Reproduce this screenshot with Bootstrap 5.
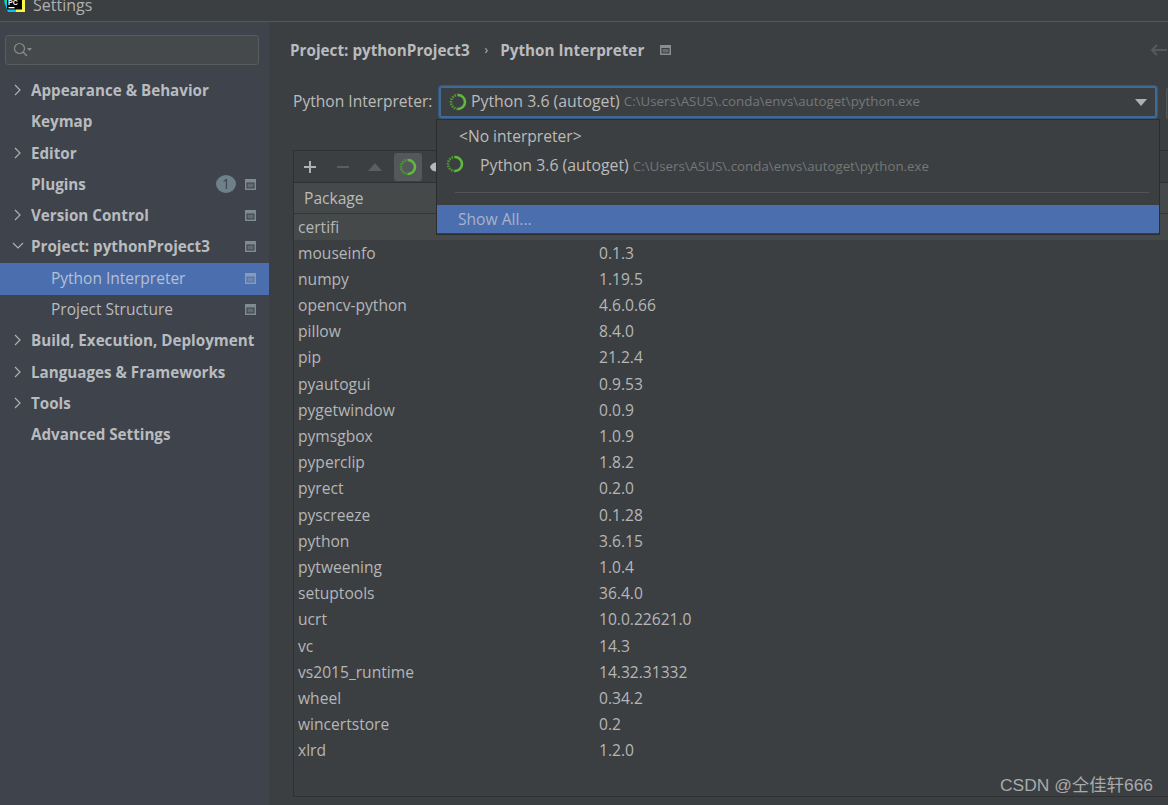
<!DOCTYPE html>
<html lang="en"><head><meta charset="utf-8"><title>Settings</title>
<link rel="stylesheet" href="https://cdn.jsdelivr.net/npm/bootstrap@5.3.0/dist/css/bootstrap.min.css">
<style>
html,body{height:100%}
body{width:1168px;height:805px;overflow:hidden;background:#3c3f41;color:#bbb;font-family:"Open Sans","Noto Sans",sans-serif;font-size:15.6px;position:relative}
.title-bar{height:22px;border-bottom:1px solid #55585a;background:#3c3f41;overflow:hidden}
.title-text{font-size:16px;color:#aeb0b2;line-height:10px;margin-left:7px}
.shell{height:783px}
.side{width:269px;background:#3e434c;flex:none}
.search-box{margin:13px 10px 0 5px;height:30px;border:1px solid #5a5c5e;border-radius:3px;background:#46494b;padding-left:7px}
.tree{margin-top:10px}
.tree-row{height:31.3px;line-height:31.3px;position:relative;padding-left:31px;font-weight:700;font-size:15.2px;color:#b9bcbf}
.tree-row.sub{padding-left:51px;font-weight:400;font-size:15.5px}
.tree-row.sel{background:#4b6eaf;color:#b5c0d4;height:32px;margin-bottom:-.7px}
.chev{position:absolute;left:14px;top:9px}
.chev-open{left:12px;top:11px}
.proj{position:absolute;left:245px;top:10px}
.count{position:absolute;left:216px;top:6px;width:20px;height:18px;border-radius:50%;background:#6e8089;color:#3e434c;font-size:14px;font-weight:400;line-height:18px;text-align:center}
.main{min-width:0;position:relative}
.crumbs{height:56px;padding:0 0 0 21px;font-weight:700;color:#b9bcbf;font-size:15.25px}
.crumb-sep{margin:0 12px 0 15px;font-weight:400;font-size:12px}
.back-arrow{margin-right:-1px}
.interp-row{height:38px;padding-left:24px;margin-top:5px}
.interp-label{width:146px;flex:none;white-space:nowrap}
.combo{width:718px;flex:none;height:32px;border:2px solid #3f6a98;border-radius:3px;background:#3c3f41;padding-left:8px;position:relative;box-shadow:0 0 0 1px #3a5675;white-space:nowrap}
.py-name{font-size:15.85px}
.path{font-size:13.3px;color:#757779;margin-left:4px}
.caret-down{position:absolute;right:8px;top:11px;width:0;height:0;border-left:6px solid transparent;border-right:6px solid transparent;border-top:7px solid #aeb0b2}
.extra-btn{position:absolute;left:897px;top:66px;width:10px;height:31px;border:1px solid #55585a;border-right:0;border-radius:3px 0 0 3px;background:#45484a}
.pkg-panel{margin:29px 0 0 24px;border:1px solid #2e3032;border-right:0;height:647px}
.tools{height:32px;border-bottom:1px solid #2e3032;padding-left:9px}
.tool-a{width:33px}
.tool-b{width:31px}
.tool-c{width:27px}
.tool-on{width:28px;height:28px;border-radius:3px;background:#55585a;margin-right:8px}
.pkg-head{height:30.5px;background:#45494a;border-bottom:1px solid #333537;line-height:30.5px;padding-left:10px}
.pkg-row{height:26.2px;line-height:26.2px;padding-left:4px;color:#b4b6b8}
.pkg-row.alt{background:#45494a}
.pkg-name{width:301px;flex:none}
.popup{position:absolute;left:167px;top:97px;width:724px;height:116px;background:#3c3f41;border:1px solid #2b2d2e;z-index:5}
.pop-item{height:29px;line-height:29px;white-space:nowrap}
.pop-none{padding-left:22px;margin-top:2px}
.pop-py{position:relative;padding-left:43px}
.pop-py svg{position:absolute;left:9px;top:4px}
.pop-line{height:1px;background:#515355;margin:12px 10px 12px 18px}
.pop-sel{background:#4b6eaf;height:28px;line-height:28px;padding-left:21px;color:#a9b3c6}
.mark-logo{position:absolute;right:15px;bottom:9px;font-family:"Liberation Sans","Noto Sans CJK SC",sans-serif;font-size:17.4px;color:#a8aaac;z-index:6;line-height:22px}
</style></head>
<body>
<div class="title-bar d-flex align-items-center">
  <svg width="22" height="12" viewBox="0 0 22 12" class="ms-1 align-self-start" aria-hidden="true"><path d="M0 0h20v11H4z" fill="#21d789"/><path d="M12 0h9v12h-9z" fill="#fcf84a"/><path d="M0 2l4 10h8V8z" fill="#07c3f2"/><rect x="3" y="0" width="15" height="9.500" fill="#000"/><text x="4" y="5" font-size="7" font-weight="700" fill="#fff" font-family="Liberation Sans">PC</text><rect x="4.500" y="7" width="6" height="1.300" fill="#fff"/></svg>
  <div class="title-text align-self-start">Settings</div>
</div>
<div class="shell d-flex">
  <div class="side">
    <div class="search-box d-flex align-items-center">
      <svg width="20" height="16" viewBox="0 0 20 16" aria-hidden="true"><circle cx="6.500" cy="6.500" r="5" fill="none" stroke="#87898b" stroke-width="1.200"/><path d="M10 10l4 4" stroke="#87898b" stroke-width="1.400"/><path d="M14 6h5l-2.500 3z" fill="#87898b"/></svg>
    </div>
    <div class="tree">
      <div class="tree-row"><svg class="chev" width="8" height="12" viewBox="0 0 8 12" aria-hidden="true"><path d="M1 1l5 5-5 5" fill="none" stroke="#aeb0b2" stroke-width="1.200"/></svg>Appearance &amp; Behavior</div>
      <div class="tree-row">Keymap</div>
      <div class="tree-row"><svg class="chev" width="8" height="12" viewBox="0 0 8 12" aria-hidden="true"><path d="M1 1l5 5-5 5" fill="none" stroke="#aeb0b2" stroke-width="1.200"/></svg>Editor</div>
      <div class="tree-row">Plugins<span class="count">1</span><svg class="proj" width="11" height="11" viewBox="0 0 11 11" aria-hidden="true"><path fill="#7f8b91" fill-rule="evenodd" d="M0 0h11v11H0zM1.500 3.500v6h8v-6z"/><rect x="2.500" y="4.500" width="6" height="4" fill="#7f8b91" opacity=".55"/></svg></div>
      <div class="tree-row"><svg class="chev" width="8" height="12" viewBox="0 0 8 12" aria-hidden="true"><path d="M1 1l5 5-5 5" fill="none" stroke="#aeb0b2" stroke-width="1.200"/></svg>Version Control<svg class="proj" width="11" height="11" viewBox="0 0 11 11" aria-hidden="true"><path fill="#7f8b91" fill-rule="evenodd" d="M0 0h11v11H0zM1.500 3.500v6h8v-6z"/><rect x="2.500" y="4.500" width="6" height="4" fill="#7f8b91" opacity=".55"/></svg></div>
      <div class="tree-row"><svg class="chev chev-open" width="12" height="8" viewBox="0 0 12 8" aria-hidden="true"><path d="M1 1l5 5 5-5" fill="none" stroke="#aeb0b2" stroke-width="1.200"/></svg>Project: pythonProject3<svg class="proj" width="11" height="11" viewBox="0 0 11 11" aria-hidden="true"><path fill="#7f8b91" fill-rule="evenodd" d="M0 0h11v11H0zM1.500 3.500v6h8v-6z"/><rect x="2.500" y="4.500" width="6" height="4" fill="#7f8b91" opacity=".55"/></svg></div>
      <div class="tree-row sub sel">Python Interpreter<svg class="proj" width="11" height="11" viewBox="0 0 11 11" aria-hidden="true"><path fill="#8b9bb5" fill-rule="evenodd" d="M0 0h11v11H0zM1.500 3.500v6h8v-6z"/><rect x="2.500" y="4.500" width="6" height="4" fill="#8b9bb5" opacity=".55"/></svg></div>
      <div class="tree-row sub">Project Structure<svg class="proj" width="11" height="11" viewBox="0 0 11 11" aria-hidden="true"><path fill="#7f8b91" fill-rule="evenodd" d="M0 0h11v11H0zM1.500 3.500v6h8v-6z"/><rect x="2.500" y="4.500" width="6" height="4" fill="#7f8b91" opacity=".55"/></svg></div>
      <div class="tree-row"><svg class="chev" width="8" height="12" viewBox="0 0 8 12" aria-hidden="true"><path d="M1 1l5 5-5 5" fill="none" stroke="#aeb0b2" stroke-width="1.200"/></svg>Build, Execution, Deployment</div>
      <div class="tree-row"><svg class="chev" width="8" height="12" viewBox="0 0 8 12" aria-hidden="true"><path d="M1 1l5 5-5 5" fill="none" stroke="#aeb0b2" stroke-width="1.200"/></svg>Languages &amp; Frameworks</div>
      <div class="tree-row"><svg class="chev" width="8" height="12" viewBox="0 0 8 12" aria-hidden="true"><path d="M1 1l5 5-5 5" fill="none" stroke="#aeb0b2" stroke-width="1.200"/></svg>Tools</div>
      <div class="tree-row">Advanced Settings</div>
    </div>
  </div>
  <div class="main flex-grow-1">
    <div class="crumbs d-flex align-items-center">
      <span>Project: pythonProject3</span><span class="crumb-sep">›</span><span>Python Interpreter</span>
      <svg class="ms-3" width="11" height="10" viewBox="0 0 11 10" aria-hidden="true"><path fill="#8a8d8f" fill-rule="evenodd" d="M0 0h11v10H0zM1.500 3v5.500h8V3z"/><rect x="2.500" y="4" width="6" height="3.500" fill="#8a8d8f" opacity=".55"/></svg>
      <svg class="ms-auto back-arrow" width="20" height="14" viewBox="0 0 20 14" aria-hidden="true"><path d="M18 7H3M8 2L3 7l5 5" fill="none" stroke="#56595b" stroke-width="2"/></svg>
    </div>
    <div class="interp-row d-flex align-items-center">
      <div class="interp-label">Python Interpreter:</div>
      <div class="combo d-flex align-items-center">
        <svg width="18" height="18" viewBox="0 0 18 18" class="me-1" aria-hidden="true"><path d="M9 2a7 7 0 0 1 0 14" fill="none" stroke="#5fba3c" stroke-width="2.600"/><path d="M9 16a7 7 0 0 1 0-14" fill="none" stroke="#4c9a30" stroke-width="2.600" stroke-dasharray="1.600 1"/></svg>
        <span class="py-name">Python 3.6 (autoget)</span><span class="path">C:\Users\ASUS\.conda\envs\autoget\python.exe</span>
        <span class="caret-down"></span>
      </div>
    </div>
    <div class="extra-btn"></div>
    <div class="pkg-panel">
      <div class="tools d-flex align-items-center">
        <div class="tool-a d-flex align-items-center"><svg width="14" height="14" viewBox="0 0 14 14" aria-hidden="true"><path d="M7 1v12M1 7h12" stroke="#b0b2b4" stroke-width="2"/></svg></div>
        <div class="tool-b d-flex align-items-center"><svg width="14" height="14" viewBox="0 0 14 14" aria-hidden="true"><path d="M1 7h12" stroke="#5b5e60" stroke-width="2"/></svg></div>
        <div class="tool-c d-flex align-items-center"><svg width="16" height="10" viewBox="0 0 16 10" aria-hidden="true"><path d="M8 1l7 8H1z" fill="#5b5e60"/></svg></div>
        <div class="tool-on d-flex align-items-center justify-content-center"><svg width="18" height="18" viewBox="0 0 18 18" aria-hidden="true"><path d="M9 2a7 7 0 0 1 0 14" fill="none" stroke="#5fba3c" stroke-width="2.600"/><path d="M9 16a7 7 0 0 1 0-14" fill="none" stroke="#4c9a30" stroke-width="2.600" stroke-dasharray="1.600 1"/></svg></div>
        <svg width="8" height="10" viewBox="0 0 8 10" aria-hidden="true"><path d="M7 0.500A7 7 0 0 0 0 5a7 7 0 0 0 7 4.500z" fill="#b5b7b9"/></svg>
      </div>
      <div class="pkg-head">Package</div>
      <div class="pkg-row alt d-flex"><div class="pkg-name">certifi</div><div></div></div>
      <div class="pkg-row d-flex"><div class="pkg-name">mouseinfo</div><div>0.1.3</div></div>
      <div class="pkg-row d-flex"><div class="pkg-name">numpy</div><div>1.19.5</div></div>
      <div class="pkg-row d-flex"><div class="pkg-name">opencv-python</div><div>4.6.0.66</div></div>
      <div class="pkg-row d-flex"><div class="pkg-name">pillow</div><div>8.4.0</div></div>
      <div class="pkg-row d-flex"><div class="pkg-name">pip</div><div>21.2.4</div></div>
      <div class="pkg-row d-flex"><div class="pkg-name">pyautogui</div><div>0.9.53</div></div>
      <div class="pkg-row d-flex"><div class="pkg-name">pygetwindow</div><div>0.0.9</div></div>
      <div class="pkg-row d-flex"><div class="pkg-name">pymsgbox</div><div>1.0.9</div></div>
      <div class="pkg-row d-flex"><div class="pkg-name">pyperclip</div><div>1.8.2</div></div>
      <div class="pkg-row d-flex"><div class="pkg-name">pyrect</div><div>0.2.0</div></div>
      <div class="pkg-row d-flex"><div class="pkg-name">pyscreeze</div><div>0.1.28</div></div>
      <div class="pkg-row d-flex"><div class="pkg-name">python</div><div>3.6.15</div></div>
      <div class="pkg-row d-flex"><div class="pkg-name">pytweening</div><div>1.0.4</div></div>
      <div class="pkg-row d-flex"><div class="pkg-name">setuptools</div><div>36.4.0</div></div>
      <div class="pkg-row d-flex"><div class="pkg-name">ucrt</div><div>10.0.22621.0</div></div>
      <div class="pkg-row d-flex"><div class="pkg-name">vc</div><div>14.3</div></div>
      <div class="pkg-row d-flex"><div class="pkg-name">vs2015_runtime</div><div>14.32.31332</div></div>
      <div class="pkg-row d-flex"><div class="pkg-name">wheel</div><div>0.34.2</div></div>
      <div class="pkg-row d-flex"><div class="pkg-name">wincertstore</div><div>0.2</div></div>
      <div class="pkg-row d-flex"><div class="pkg-name">xlrd</div><div>1.2.0</div></div>
    </div>
    <div class="popup">
      <div class="pop-item pop-none">&lt;No interpreter&gt;</div>
      <div class="pop-item pop-py py-name"><svg width="18" height="18" viewBox="0 0 18 18" aria-hidden="true"><path d="M9 2a7 7 0 0 1 0 14" fill="none" stroke="#5fba3c" stroke-width="2.600"/><path d="M9 16a7 7 0 0 1 0-14" fill="none" stroke="#4c9a30" stroke-width="2.600" stroke-dasharray="1.600 1"/></svg>Python 3.6 (autoget)<span class="path">C:\Users\ASUS\.conda\envs\autoget\python.exe</span></div>
      <div class="pop-line"></div>
      <div class="pop-sel">Show All...</div>
    </div>
  </div>
</div>
<div class="mark-logo">CSDN @仝佳轩666</div>
</body></html>
